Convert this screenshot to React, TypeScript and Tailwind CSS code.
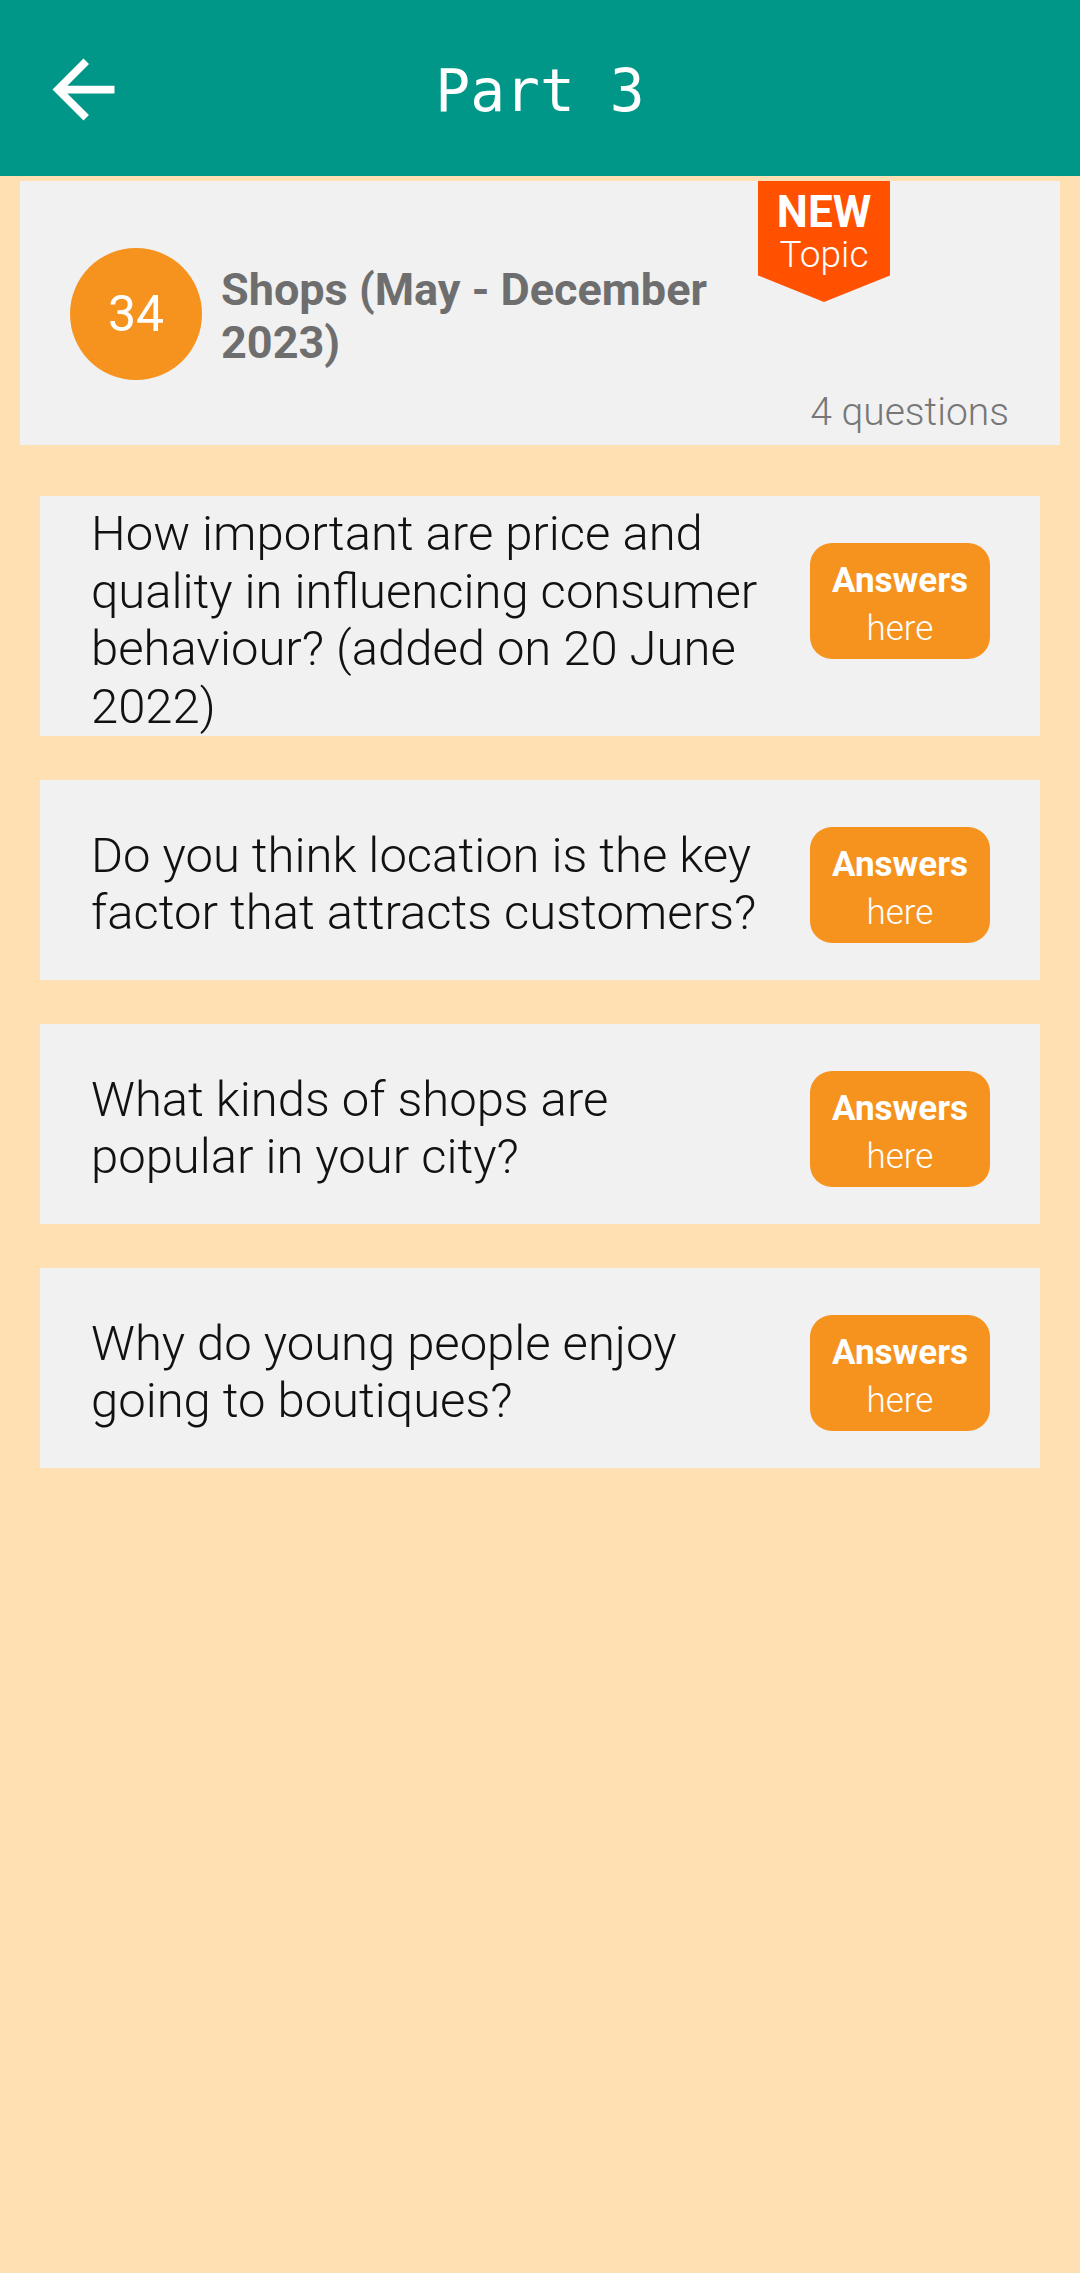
import React from "react";

const questions = [
  "How important are price and quality in influencing consumer behaviour? (added on 20 June 2022)",
  "Do you think location is the key factor that attracts customers?",
  "What kinds of shops are popular in your city?",
  "Why do young people enjoy going to boutiques?",
];

export default function App() {
  return (
    <div className="min-h-[2273px] w-[1080px] bg-[#ffe0b2] font-['Roboto',sans-serif]">
      {/* Top bar */}
      <header className="flex h-[176px] items-center bg-[#009688]">
        <div className="flex w-[130px] justify-end pt-[2px]">
          <svg width="93" height="93" viewBox="0 0 24 24" fill="#ffffff" aria-label="Back">
            <path d="M20 11H7.83l5.59-5.59L12 4l-8 8 8 8 1.41-1.41L7.83 13H20v-2z" />
          </svg>
        </div>
        <h1 className="flex-1 pt-[6px] text-center font-['DejaVu_Sans_Mono',monospace] text-[58px] leading-none text-white">
          Part 3
        </h1>
        <div className="w-[130px]" />
      </header>

      {/* Topic card */}
      <section className="relative mx-[20px] mt-[5px] bg-[#f1f1f1] pl-[50px] pr-[51px] pt-[67px] pb-[10px]">
        <div className="flex items-center">
          <div className="flex h-[132px] w-[132px] shrink-0 items-center justify-center rounded-full bg-[#f6931f] text-[50px] text-white">
            34
          </div>
          <h2 className="ml-[19px] w-[520px] pt-[3px] text-[45px] font-bold leading-[53px] text-[#6e6e6e]">
            Shops (May - December 2023)
          </h2>
        </div>
        <p className="mt-[9px] text-right text-[39px] font-light leading-[46px] text-[#777777]">
          4 questions
        </p>

        <div className="absolute left-[738px] top-0 flex h-[121px] w-[132px] flex-col items-center bg-[#ff5100] pt-[11px] [clip-path:polygon(0_0,100%_0,100%_78%,50%_100%,0_78%)]">
          <span className="text-[44px] font-bold leading-[40px] text-white">NEW</span>
          <span className="mt-[4px] text-[37px] font-light leading-[38px] text-white">Topic</span>
        </div>
      </section>

      {/* Questions */}
      <main className="mx-[40px] mt-[51px] flex flex-col gap-[44px]">
        {questions.map((q) => (
          <article key={q} className="flex min-h-[200px] bg-[#f1f1f1] pl-[51px] pr-[50px]">
            <p className="my-auto w-[690px] pt-[9px] pb-[1px] text-[49px] font-light leading-[57.5px] text-[#111111]">
              {q}
            </p>
            <button className="ml-auto mt-[47px] flex h-[116px] w-[180px] shrink-0 flex-col items-center justify-center rounded-[22px] bg-[#f6931f] pt-[8px] text-white">
              <span className="text-[35px] font-bold leading-[48px]">Answers</span>
              <span className="text-[35px] font-light leading-[48px]">here</span>
            </button>
          </article>
        ))}
      </main>
    </div>
  );
}
